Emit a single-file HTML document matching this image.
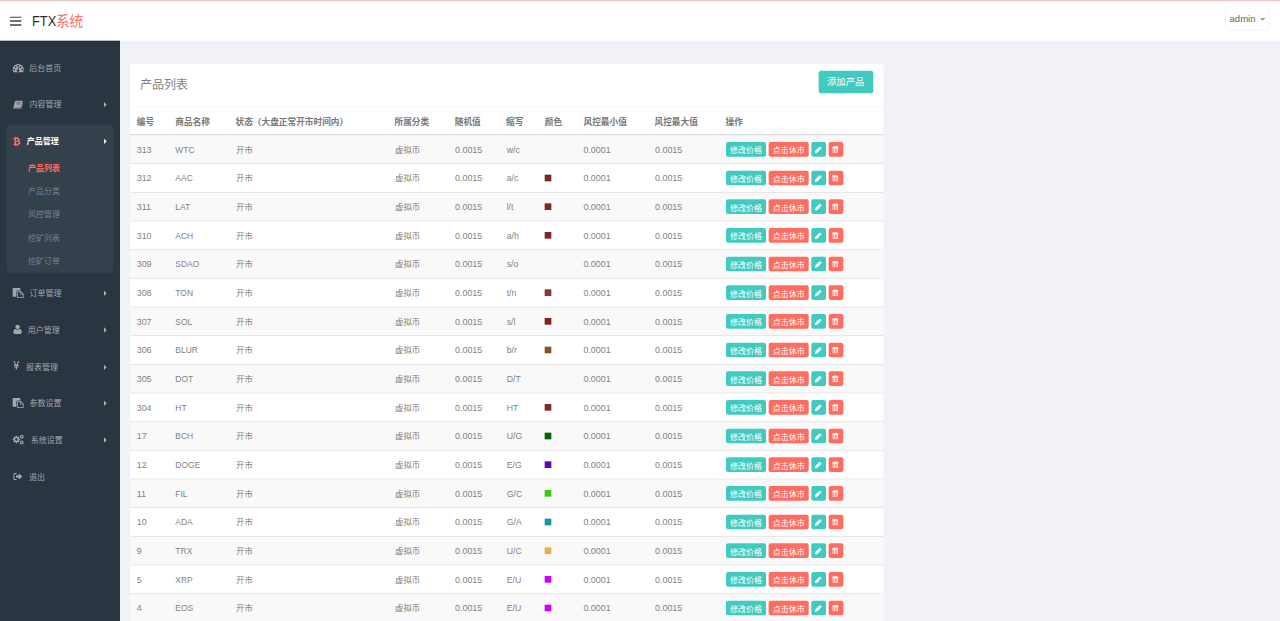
<!DOCTYPE html>
<html lang="zh-CN">
<head>
<meta charset="utf-8">
<title>FTX系统</title>
<style>
html,body{margin:0;padding:0;width:1280px;height:621px;overflow:hidden;background:#f1f2f7;}
#stage{position:absolute;left:0;top:0;width:1920px;height:932px;transform:scale(0.666667);transform-origin:0 0;font-family:"Liberation Sans","Noto Sans CJK SC",sans-serif;font-size:13px;color:#797979;background:#f1f2f7;overflow:hidden;}
#topline{position:absolute;left:0;top:0;width:1920px;height:3px;background:linear-gradient(#dbc0b6,#fff);z-index:5;}
#header{position:absolute;left:0;top:0;width:1920px;height:61px;background:#fff;}
#burger{position:absolute;left:15px;top:24.7px;width:17.3px;height:14px;}
#burger i{display:block;height:2.7px;background:#707070;margin-bottom:3px;}
#logo{position:absolute;left:47.5px;top:15.8px;font-size:21px;line-height:32px;color:#2e2e2e;white-space:nowrap;}
#logo span{color:#ff6c60;font-size:20.5px;position:relative;top:0.3px;}
#logo em{position:relative;top:0.5px;font-style:normal;font-size:21.6px;display:inline-block;transform:scaleX(0.893);transform-origin:0 50%;margin-right:-4.4px;}
#user{position:absolute;left:1837.5px;top:9.3px;width:66.5px;height:36.5px;border:1px solid #f0f0f8;border-radius:4px;box-sizing:border-box;font-size:14.4px;color:#666;line-height:36px;padding-left:5.7px;}
#user b{position:absolute;left:51.5px;top:17px;border:4px solid transparent;border-top:4px solid #999;border-bottom:0;width:0;height:0;}
#sidebar{position:absolute;left:0;top:0;width:180px;height:940px;background:#2a3542;}
#header{z-index:3;}
.ico{position:absolute;overflow:visible;}
.mt{position:absolute;font-size:12px;line-height:20px;color:#a0a5ab;white-space:nowrap;}
.mt.act{color:#fff;font-weight:bold;}
.ar{position:absolute;left:156px;width:0;height:0;border:4px solid transparent;border-left:4.5px solid #aeb2b7;border-right:0;}
#actbox{position:absolute;left:10px;top:187px;width:160px;height:222px;background:#35404d;border-radius:5px;}
.sub{position:absolute;left:42px;font-size:12px;line-height:20px;color:#77828e;white-space:nowrap;}
#card{z-index:0;position:absolute;left:195px;top:96px;width:1129.5px;height:900px;background:#fff;border-radius:4px 4px 0 0;}
#ctitle{position:absolute;left:15px;top:18.5px;font-size:18px;line-height:26px;color:#838383;}
#addbtn{position:absolute;left:1032.5px;top:10px;width:82px;height:34px;background:#41cac0;border-radius:4px;color:#fff;font-size:14px;line-height:35px;text-align:center;}
#hline{position:absolute;left:0;top:64px;width:100%;height:1px;background:#eff2f7;}
table{position:absolute;left:0;top:66.5px;width:1129.5px;border-collapse:collapse;table-layout:fixed;}
th{height:38.5px;padding:0 0 0 10px;text-align:left;font-weight:bold;color:#787878;border-bottom:2px solid #ddd;font-size:13px;white-space:nowrap;}
td{height:42px;padding:0 0 0 10px;border-top:1px solid #ddd;font-size:13px;white-space:nowrap;vertical-align:middle;}
tbody tr:first-child td{border-top:0;}
tbody td:first-child{position:relative;}
tbody tr:nth-child(odd) td:first-child::before{content:"";position:absolute;left:0;top:0;width:1129.5px;height:100%;background:#f9f9f9;z-index:-1;}
td span{position:relative;top:0.5px;font-size:13.4px;display:inline-block;transform:scaleY(1.1);transform-origin:0 79%;color:#828282;}
td span.c{top:-0.7px;font-size:12.6px;transform:none;color:#7f7f7f;}
td:nth-child(2) span{transform:scale(0.95,1.1);}
.sq{display:inline-block;width:10px;height:10px;vertical-align:middle;position:relative;top:-1px;left:-0.4px;}
.ops{font-size:0;}
.b{position:relative;top:-0.3px;display:inline-block;height:22px;line-height:18px;padding-top:4px !important;border-radius:3px;color:#fff;font-size:12px;padding:0 6px;margin-right:4px;vertical-align:middle;box-sizing:border-box;}
.bg{background:#41cac0;}
.br{background:#ff6c60;}
.ic{width:22px;padding:0;position:relative;}
.ic svg.pn{position:absolute;left:5px;top:7.2px;width:11px;height:10px;}
.ic svg.ts{position:absolute;left:5.3px;top:6.2px;width:10px;height:10.6px;}
.ic.tr{width:21.5px;}
.sub.on{color:#ff6c60;font-weight:bold;}
th span{position:relative;top:-0.6px;}
th:nth-child(1) span{left:0.1px;}
th:nth-child(2) span{left:0.5px;}
th:nth-child(3) span{left:-0.8px;}
th:nth-child(4) span{left:-0.8px;}
th:nth-child(5) span{left:-0.4px;}
th:nth-child(6) span{left:0.1px;}
th:nth-child(7) span{left:-0.4px;}
th:nth-child(8) span{left:0.7px;}
th:nth-child(9) span{left:-0.8px;}
th:nth-child(10) span{left:-0.8px;}
td:nth-child(2) span{left:0.9px;}
td:nth-child(6) span{left:0.6px;}
td:nth-child(8) span{left:0.6px;}
td:nth-child(6) span{transform:scale(0.98,1.1);}
#sbshade{position:absolute;left:0;top:61px;width:180px;height:2.5px;background:linear-gradient(#1f2934,#2a3542);}

</style>
</head>
<body>
<div id="stage">
<div id="header">
  <div id="burger"><i></i><i></i><i></i></div>
  <div id="logo"><em>FTX</em><span>系统</span></div>
  <div id="user">admin<b></b></div>
</div>
<div id="topline"></div>
<div id="sidebar">
  <div id="sbshade"></div>
  <div id="actbox"></div>
<svg class="ico" viewBox="0 0 16 12" preserveAspectRatio="none" style="left:19.2px;top:95.7px;width:16.6px;height:12.3px" fill="#a3a8af" stroke="#a3a8af" stroke-width="0"><path fill-rule="evenodd" d="M1.3 12 C0.5 10.8 0 9.4 0 8 A8 8 0 0 1 16 8 C16 9.4 15.5 10.8 14.7 12 Z M2.4 7 a1.15 1.15 0 1 0 0.01 0 Z M4.4 3.3 a1.15 1.15 0 1 0 0.01 0 Z M8 1.6 a1.15 1.15 0 1 0 0.01 0 Z M11.6 3.3 a1.15 1.15 0 1 0 0.01 0 Z M13.6 7 a1.15 1.15 0 1 0 0.01 0 Z M9.2 3.8 L7.6 7.8 A1.8 1.8 0 1 0 8.7 8.1 L10 4.1 Z"/></svg>
<div class="mt" style="left:44px;top:92px">后台首页</div>
<svg class="ico" viewBox="0 0 14 12" preserveAspectRatio="none" style="left:19.5px;top:150.5px;width:14.25px;height:12.25px" fill="#a3a8af" stroke="#a3a8af" stroke-width="0"><path fill-rule="evenodd" d="M3.6 0 H13 Q14.2 0 13.8 1.2 L11.4 9.4 Q11.1 10.4 10 10.4 H2.2 Q1.6 10.4 1.7 10.9 Q1.8 11.2 2.4 11.2 H10.6 Q11.3 11.2 11.6 10.4 L13.6 3.4 Q14.2 3.8 14 4.6 L12 11 Q11.7 12 10.6 12 H2 Q0.2 12 0 10.4 Q0 9.9 0.2 9.4 L2.6 1 Q3 0 3.6 0 Z M5 2.6 L4.8 3.4 H11 L11.2 2.6 Z M4.5 4.4 L4.3 5.2 H10.5 L10.7 4.4 Z"/></svg>
<div class="mt" style="left:44.1px;top:147px">内容管理</div>
<i class="ar" style="top:153px;border-left-color:#aeb2b7"></i>
<svg class="ico" viewBox="0 0 11 14" preserveAspectRatio="none" style="left:20.4px;top:204.75px;width:11.1px;height:14.25px" fill="#ff6c60" stroke="#ff6c60" stroke-width="0"><path fill-rule="evenodd" d="M2.6 0 H4.1 V1.7 H5.2 V0 H6.7 V1.8 Q9.6 2.1 9.8 4.2 Q9.9 5.9 8.5 6.6 Q10.8 7.2 10.6 9.4 Q10.3 11.9 6.7 12.1 V14 H5.2 V12.2 H4.1 V14 H2.6 V12.2 H0 L0.3 10.5 H1.2 Q1.7 10.5 1.7 10 V3.9 Q1.7 3.3 1 3.3 H0 V1.7 H2.6 Z M4 3.4 V6 Q7.3 6.2 7.3 4.7 Q7.3 3.2 4 3.4 Z M4 7.6 V10.5 Q8 10.7 8 9 Q8 7.4 4 7.6 Z"/></svg>
<div class="mt act" style="left:40.2px;top:202px">产品管理</div>
<i class="ar" style="top:208px;border-left-color:#fff"></i>
<svg class="ico" viewBox="0 0 16.5 15" preserveAspectRatio="none" style="left:19.4px;top:431.8px;width:16.5px;height:15px" fill="#a3a8af" stroke="#a3a8af" stroke-width="0"><path fill-rule="evenodd" d="M0.8 0 H10.8 Q11.6 0 11.6 0.8 V3.6 H7 Q5.6 3.6 5.6 5 V13 H0.8 Q0 13 0 12.2 V0.8 Q0 0 0.8 0 Z M7.4 4.5 H12.3 L16.5 8.6 V14.2 Q16.5 15 15.7 15 H7.4 Q6.6 15 6.6 14.2 V5.3 Q6.6 4.5 7.4 4.5 Z M7.8 5.7 V13.8 H15.3 V9.9 H11.9 Q10.9 9.9 10.9 8.9 V5.7 Z M12.1 6 L14.8 8.7 H12.1 Z"/></svg>
<div class="mt" style="left:44.1px;top:429.5px">订单管理</div>
<i class="ar" style="top:435.5px;border-left-color:#aeb2b7"></i>
<svg class="ico" viewBox="0 0 13 14" preserveAspectRatio="none" style="left:19.5px;top:487px;width:12.75px;height:14px" fill="#a3a8af" stroke="#a3a8af" stroke-width="0"><path d="M6.5 0 A3.4 3.4 0 1 1 6.49 0 Z M3.4 6.6 Q4.8 7.8 6.5 7.8 Q8.2 7.8 9.6 6.6 Q12.6 6.8 13 11.4 Q13 14 10.6 14 H2.4 Q0 14 0 11.4 Q0.4 6.8 3.4 6.6 Z"/></svg>
<div class="mt" style="left:41.7px;top:485px">用户管理</div>
<i class="ar" style="top:491px;border-left-color:#aeb2b7"></i>
<svg class="ico" viewBox="0 0 9 12" preserveAspectRatio="none" style="left:20px;top:542.4px;width:9.1px;height:12.3px" fill="#a3a8af" stroke="#a3a8af" stroke-width="0"><path d="M0 0 H1.9 L4.5 5 L7.1 0 H9 L6.1 5.4 H8.2 V6.7 H5.4 V7.8 H8.2 V9.1 H5.4 V12 H3.6 V9.1 H0.8 V7.8 H3.6 V6.7 H0.8 V5.4 H2.9 Z"/></svg>
<div class="mt" style="left:38.85px;top:540.5px">报表管理</div>
<i class="ar" style="top:546.5px;border-left-color:#aeb2b7"></i>
<svg class="ico" viewBox="0 0 16.5 15" preserveAspectRatio="none" style="left:19.4px;top:596.8px;width:16.5px;height:15px" fill="#a3a8af" stroke="#a3a8af" stroke-width="0"><path fill-rule="evenodd" d="M0.8 0 H10.8 Q11.6 0 11.6 0.8 V3.6 H7 Q5.6 3.6 5.6 5 V13 H0.8 Q0 13 0 12.2 V0.8 Q0 0 0.8 0 Z M7.4 4.5 H12.3 L16.5 8.6 V14.2 Q16.5 15 15.7 15 H7.4 Q6.6 15 6.6 14.2 V5.3 Q6.6 4.5 7.4 4.5 Z M7.8 5.7 V13.8 H15.3 V9.9 H11.9 Q10.9 9.9 10.9 8.9 V5.7 Z M12.1 6 L14.8 8.7 H12.1 Z"/></svg>
<div class="mt" style="left:44.1px;top:594.5px">参数设置</div>
<i class="ar" style="top:600.5px;border-left-color:#aeb2b7"></i>
<svg class="ico" viewBox="0 0 16.75 14.9" preserveAspectRatio="none" style="left:19.45px;top:651.8px;width:16.75px;height:14.9px" fill="#a3a8af" stroke="#a3a8af" stroke-width="0"><path fill-rule="evenodd" d="M11.13 6.42 L11.13 8.18 L9.67 8.34 L9.22 9.44 L10.13 10.59 L8.89 11.83 L7.74 10.92 L6.64 11.37 L6.48 12.83 L4.72 12.83 L4.56 11.37 L3.46 10.92 L2.31 11.83 L1.07 10.59 L1.98 9.44 L1.53 8.34 L0.07 8.18 L0.07 6.42 L1.53 6.26 L1.98 5.16 L1.07 4.01 L2.31 2.77 L3.46 3.68 L4.56 3.23 L4.72 1.77 L6.48 1.77 L6.64 3.23 L7.74 3.68 L8.89 2.77 L10.13 4.01 L9.22 5.16 L9.67 6.26 Z M3.60 7.30 a2.0 2.0 0 1 0 4.0 0 a2.0 2.0 0 1 0 -4.0 0 Z M16.66 3.84 L16.28 4.76 L15.43 4.51 L14.97 4.98 L15.23 5.82 L14.31 6.21 L13.89 5.43 L13.23 5.43 L12.81 6.21 L11.89 5.83 L12.14 4.98 L11.67 4.52 L10.83 4.78 L10.44 3.86 L11.22 3.44 L11.22 2.78 L10.44 2.36 L10.82 1.44 L11.67 1.69 L12.13 1.22 L11.87 0.38 L12.79 -0.01 L13.21 0.77 L13.87 0.77 L14.29 -0.01 L15.21 0.37 L14.96 1.22 L15.43 1.68 L16.27 1.42 L16.66 2.34 L15.88 2.76 L15.88 3.42 Z M12.50 3.10 a1.05 1.05 0 1 0 2.1 0 a1.05 1.05 0 1 0 -2.1 0 Z M16.66 12.54 L16.28 13.46 L15.43 13.21 L14.97 13.68 L15.23 14.52 L14.31 14.91 L13.89 14.13 L13.23 14.13 L12.81 14.91 L11.89 14.53 L12.14 13.68 L11.67 13.22 L10.83 13.48 L10.44 12.56 L11.22 12.14 L11.22 11.48 L10.44 11.06 L10.82 10.14 L11.67 10.39 L12.13 9.92 L11.87 9.08 L12.79 8.69 L13.21 9.47 L13.87 9.47 L14.29 8.69 L15.21 9.07 L14.96 9.92 L15.43 10.38 L16.27 10.12 L16.66 11.04 L15.88 11.46 L15.88 12.12 Z M12.50 11.80 a1.05 1.05 0 1 0 2.1 0 a1.05 1.05 0 1 0 -2.1 0 Z"/></svg>
<div class="mt" style="left:46px;top:650px">系统设置</div>
<i class="ar" style="top:656px;border-left-color:#aeb2b7"></i>
<svg class="ico" viewBox="0 0 14 12" preserveAspectRatio="none" style="left:20px;top:708.5px;width:13.5px;height:11.5px" fill="#a3a8af" stroke="#a3a8af" stroke-width="0"><path d="M5 0.4 V1.9 H2.8 Q1.6 1.9 1.6 3.1 V8.9 Q1.6 10.1 2.8 10.1 H5 V11.6 H2.6 Q0 11.6 0 9 V3 Q0 0.4 2.6 0.4 Z M8.6 1 L14 6 L8.6 11 V8.1 H4.2 V3.9 H8.6 Z"/></svg>
<div class="mt" style="left:43.5px;top:706.4px">退出</div>
<div class="sub on" style="top:241.9px">产品列表</div>
<div class="sub" style="top:277.4px">产品分类</div>
<div class="sub" style="top:311.9px">风控管理</div>
<div class="sub" style="top:346.9px">挖矿列表</div>
<div class="sub" style="top:382.4px">挖矿订单</div>
</div>
<div id="card">
  <div id="ctitle">产品列表</div>
  <div id="addbtn">添加产品</div>
  <div id="hline"></div>
  <table>
    <colgroup><col style="width:57.5px"><col style="width:91.5px"><col style="width:238.5px"><col style="width:90px"><col style="width:76.5px"><col style="width:58.5px"><col style="width:57px"><col style="width:108px"><col style="width:106.5px"><col></colgroup>
    <thead><tr><th><span>编号</span></th><th><span>商品名称</span></th><th><span>状态（大盘正常开市时间内）</span></th><th><span>所属分类</span></th><th><span>随机值</span></th><th><span>缩写</span></th><th><span>颜色</span></th><th><span>风控最小值</span></th><th><span>风控最大值</span></th><th><span>操作</span></th></tr></thead>
    <tbody>
<tr><td><span>313</span></td><td><span>WTC</span></td><td><span class="c">开市</span></td><td><span class="c">虚拟币</span></td><td><span>0.0015</span></td><td><span>w/c</span></td><td></td><td><span>0.0001</span></td><td><span>0.0015</span></td><td class="ops"><a class="b bg">修改价格</a><a class="b br">点击休市</a><a class="b bg ic"><svg class="pn" viewBox="0 0 11 10"><path d="M0 10 L0.92 6.12 L6.72 0.32 Q7.7 -0.5 8.7 0.3 L10.2 1.8 Q10.9 2.6 9.68 3.28 L3.88 9.08 Z" fill="#fff"/></svg></a><a class="b br ic tr"><svg class="ts" viewBox="0 0 10 10.6"><path d="M3.3 0 H6.7 L7.4 1.2 H10 V2.4 H0 V1.2 H2.6 Z M4 0.8 L3.8 1.2 H6.2 L6 0.8 Z M1 2.4 H9 V9.6 Q9 10.6 8 10.6 H2 Q1 10.6 1 9.6 Z M2.1 3.5 V9.5 H7.9 V3.5 Z M3.3 3.5 H4.4 V9.5 H3.3 Z M5.6 3.5 H6.7 V9.5 H5.6 Z" fill="#fff" fill-rule="evenodd"/></svg></a></td></tr>
<tr><td><span>312</span></td><td><span>AAC</span></td><td><span class="c">开市</span></td><td><span class="c">虚拟币</span></td><td><span>0.0015</span></td><td><span>a/c</span></td><td><i class="sq" style="background:#80261a"></i></td><td><span>0.0001</span></td><td><span>0.0015</span></td><td class="ops"><a class="b bg">修改价格</a><a class="b br">点击休市</a><a class="b bg ic"><svg class="pn" viewBox="0 0 11 10"><path d="M0 10 L0.92 6.12 L6.72 0.32 Q7.7 -0.5 8.7 0.3 L10.2 1.8 Q10.9 2.6 9.68 3.28 L3.88 9.08 Z" fill="#fff"/></svg></a><a class="b br ic tr"><svg class="ts" viewBox="0 0 10 10.6"><path d="M3.3 0 H6.7 L7.4 1.2 H10 V2.4 H0 V1.2 H2.6 Z M4 0.8 L3.8 1.2 H6.2 L6 0.8 Z M1 2.4 H9 V9.6 Q9 10.6 8 10.6 H2 Q1 10.6 1 9.6 Z M2.1 3.5 V9.5 H7.9 V3.5 Z M3.3 3.5 H4.4 V9.5 H3.3 Z M5.6 3.5 H6.7 V9.5 H5.6 Z" fill="#fff" fill-rule="evenodd"/></svg></a></td></tr>
<tr><td><span>311</span></td><td><span>LAT</span></td><td><span class="c">开市</span></td><td><span class="c">虚拟币</span></td><td><span>0.0015</span></td><td><span>l/t</span></td><td><i class="sq" style="background:#80261a"></i></td><td><span>0.0001</span></td><td><span>0.0015</span></td><td class="ops"><a class="b bg">修改价格</a><a class="b br">点击休市</a><a class="b bg ic"><svg class="pn" viewBox="0 0 11 10"><path d="M0 10 L0.92 6.12 L6.72 0.32 Q7.7 -0.5 8.7 0.3 L10.2 1.8 Q10.9 2.6 9.68 3.28 L3.88 9.08 Z" fill="#fff"/></svg></a><a class="b br ic tr"><svg class="ts" viewBox="0 0 10 10.6"><path d="M3.3 0 H6.7 L7.4 1.2 H10 V2.4 H0 V1.2 H2.6 Z M4 0.8 L3.8 1.2 H6.2 L6 0.8 Z M1 2.4 H9 V9.6 Q9 10.6 8 10.6 H2 Q1 10.6 1 9.6 Z M2.1 3.5 V9.5 H7.9 V3.5 Z M3.3 3.5 H4.4 V9.5 H3.3 Z M5.6 3.5 H6.7 V9.5 H5.6 Z" fill="#fff" fill-rule="evenodd"/></svg></a></td></tr>
<tr><td><span>310</span></td><td><span>ACH</span></td><td><span class="c">开市</span></td><td><span class="c">虚拟币</span></td><td><span>0.0015</span></td><td><span>a/h</span></td><td><i class="sq" style="background:#80262a"></i></td><td><span>0.0001</span></td><td><span>0.0015</span></td><td class="ops"><a class="b bg">修改价格</a><a class="b br">点击休市</a><a class="b bg ic"><svg class="pn" viewBox="0 0 11 10"><path d="M0 10 L0.92 6.12 L6.72 0.32 Q7.7 -0.5 8.7 0.3 L10.2 1.8 Q10.9 2.6 9.68 3.28 L3.88 9.08 Z" fill="#fff"/></svg></a><a class="b br ic tr"><svg class="ts" viewBox="0 0 10 10.6"><path d="M3.3 0 H6.7 L7.4 1.2 H10 V2.4 H0 V1.2 H2.6 Z M4 0.8 L3.8 1.2 H6.2 L6 0.8 Z M1 2.4 H9 V9.6 Q9 10.6 8 10.6 H2 Q1 10.6 1 9.6 Z M2.1 3.5 V9.5 H7.9 V3.5 Z M3.3 3.5 H4.4 V9.5 H3.3 Z M5.6 3.5 H6.7 V9.5 H5.6 Z" fill="#fff" fill-rule="evenodd"/></svg></a></td></tr>
<tr><td><span>309</span></td><td><span>SDAO</span></td><td><span class="c">开市</span></td><td><span class="c">虚拟币</span></td><td><span>0.0015</span></td><td><span>s/o</span></td><td></td><td><span>0.0001</span></td><td><span>0.0015</span></td><td class="ops"><a class="b bg">修改价格</a><a class="b br">点击休市</a><a class="b bg ic"><svg class="pn" viewBox="0 0 11 10"><path d="M0 10 L0.92 6.12 L6.72 0.32 Q7.7 -0.5 8.7 0.3 L10.2 1.8 Q10.9 2.6 9.68 3.28 L3.88 9.08 Z" fill="#fff"/></svg></a><a class="b br ic tr"><svg class="ts" viewBox="0 0 10 10.6"><path d="M3.3 0 H6.7 L7.4 1.2 H10 V2.4 H0 V1.2 H2.6 Z M4 0.8 L3.8 1.2 H6.2 L6 0.8 Z M1 2.4 H9 V9.6 Q9 10.6 8 10.6 H2 Q1 10.6 1 9.6 Z M2.1 3.5 V9.5 H7.9 V3.5 Z M3.3 3.5 H4.4 V9.5 H3.3 Z M5.6 3.5 H6.7 V9.5 H5.6 Z" fill="#fff" fill-rule="evenodd"/></svg></a></td></tr>
<tr><td><span>308</span></td><td><span>TON</span></td><td><span class="c">开市</span></td><td><span class="c">虚拟币</span></td><td><span>0.0015</span></td><td><span>t/n</span></td><td><i class="sq" style="background:#85382c"></i></td><td><span>0.0001</span></td><td><span>0.0015</span></td><td class="ops"><a class="b bg">修改价格</a><a class="b br">点击休市</a><a class="b bg ic"><svg class="pn" viewBox="0 0 11 10"><path d="M0 10 L0.92 6.12 L6.72 0.32 Q7.7 -0.5 8.7 0.3 L10.2 1.8 Q10.9 2.6 9.68 3.28 L3.88 9.08 Z" fill="#fff"/></svg></a><a class="b br ic tr"><svg class="ts" viewBox="0 0 10 10.6"><path d="M3.3 0 H6.7 L7.4 1.2 H10 V2.4 H0 V1.2 H2.6 Z M4 0.8 L3.8 1.2 H6.2 L6 0.8 Z M1 2.4 H9 V9.6 Q9 10.6 8 10.6 H2 Q1 10.6 1 9.6 Z M2.1 3.5 V9.5 H7.9 V3.5 Z M3.3 3.5 H4.4 V9.5 H3.3 Z M5.6 3.5 H6.7 V9.5 H5.6 Z" fill="#fff" fill-rule="evenodd"/></svg></a></td></tr>
<tr><td><span>307</span></td><td><span>SOL</span></td><td><span class="c">开市</span></td><td><span class="c">虚拟币</span></td><td><span>0.0015</span></td><td><span>s/l</span></td><td><i class="sq" style="background:#851f14"></i></td><td><span>0.0001</span></td><td><span>0.0015</span></td><td class="ops"><a class="b bg">修改价格</a><a class="b br">点击休市</a><a class="b bg ic"><svg class="pn" viewBox="0 0 11 10"><path d="M0 10 L0.92 6.12 L6.72 0.32 Q7.7 -0.5 8.7 0.3 L10.2 1.8 Q10.9 2.6 9.68 3.28 L3.88 9.08 Z" fill="#fff"/></svg></a><a class="b br ic tr"><svg class="ts" viewBox="0 0 10 10.6"><path d="M3.3 0 H6.7 L7.4 1.2 H10 V2.4 H0 V1.2 H2.6 Z M4 0.8 L3.8 1.2 H6.2 L6 0.8 Z M1 2.4 H9 V9.6 Q9 10.6 8 10.6 H2 Q1 10.6 1 9.6 Z M2.1 3.5 V9.5 H7.9 V3.5 Z M3.3 3.5 H4.4 V9.5 H3.3 Z M5.6 3.5 H6.7 V9.5 H5.6 Z" fill="#fff" fill-rule="evenodd"/></svg></a></td></tr>
<tr><td><span>306</span></td><td><span>BLUR</span></td><td><span class="c">开市</span></td><td><span class="c">虚拟币</span></td><td><span>0.0015</span></td><td><span>b/r</span></td><td><i class="sq" style="background:#80562a"></i></td><td><span>0.0001</span></td><td><span>0.0015</span></td><td class="ops"><a class="b bg">修改价格</a><a class="b br">点击休市</a><a class="b bg ic"><svg class="pn" viewBox="0 0 11 10"><path d="M0 10 L0.92 6.12 L6.72 0.32 Q7.7 -0.5 8.7 0.3 L10.2 1.8 Q10.9 2.6 9.68 3.28 L3.88 9.08 Z" fill="#fff"/></svg></a><a class="b br ic tr"><svg class="ts" viewBox="0 0 10 10.6"><path d="M3.3 0 H6.7 L7.4 1.2 H10 V2.4 H0 V1.2 H2.6 Z M4 0.8 L3.8 1.2 H6.2 L6 0.8 Z M1 2.4 H9 V9.6 Q9 10.6 8 10.6 H2 Q1 10.6 1 9.6 Z M2.1 3.5 V9.5 H7.9 V3.5 Z M3.3 3.5 H4.4 V9.5 H3.3 Z M5.6 3.5 H6.7 V9.5 H5.6 Z" fill="#fff" fill-rule="evenodd"/></svg></a></td></tr>
<tr><td><span>305</span></td><td><span>DOT</span></td><td><span class="c">开市</span></td><td><span class="c">虚拟币</span></td><td><span>0.0015</span></td><td><span>D/T</span></td><td></td><td><span>0.0001</span></td><td><span>0.0015</span></td><td class="ops"><a class="b bg">修改价格</a><a class="b br">点击休市</a><a class="b bg ic"><svg class="pn" viewBox="0 0 11 10"><path d="M0 10 L0.92 6.12 L6.72 0.32 Q7.7 -0.5 8.7 0.3 L10.2 1.8 Q10.9 2.6 9.68 3.28 L3.88 9.08 Z" fill="#fff"/></svg></a><a class="b br ic tr"><svg class="ts" viewBox="0 0 10 10.6"><path d="M3.3 0 H6.7 L7.4 1.2 H10 V2.4 H0 V1.2 H2.6 Z M4 0.8 L3.8 1.2 H6.2 L6 0.8 Z M1 2.4 H9 V9.6 Q9 10.6 8 10.6 H2 Q1 10.6 1 9.6 Z M2.1 3.5 V9.5 H7.9 V3.5 Z M3.3 3.5 H4.4 V9.5 H3.3 Z M5.6 3.5 H6.7 V9.5 H5.6 Z" fill="#fff" fill-rule="evenodd"/></svg></a></td></tr>
<tr><td><span>304</span></td><td><span>HT</span></td><td><span class="c">开市</span></td><td><span class="c">虚拟币</span></td><td><span>0.0015</span></td><td><span>HT</span></td><td><i class="sq" style="background:#802a2a"></i></td><td><span>0.0001</span></td><td><span>0.0015</span></td><td class="ops"><a class="b bg">修改价格</a><a class="b br">点击休市</a><a class="b bg ic"><svg class="pn" viewBox="0 0 11 10"><path d="M0 10 L0.92 6.12 L6.72 0.32 Q7.7 -0.5 8.7 0.3 L10.2 1.8 Q10.9 2.6 9.68 3.28 L3.88 9.08 Z" fill="#fff"/></svg></a><a class="b br ic tr"><svg class="ts" viewBox="0 0 10 10.6"><path d="M3.3 0 H6.7 L7.4 1.2 H10 V2.4 H0 V1.2 H2.6 Z M4 0.8 L3.8 1.2 H6.2 L6 0.8 Z M1 2.4 H9 V9.6 Q9 10.6 8 10.6 H2 Q1 10.6 1 9.6 Z M2.1 3.5 V9.5 H7.9 V3.5 Z M3.3 3.5 H4.4 V9.5 H3.3 Z M5.6 3.5 H6.7 V9.5 H5.6 Z" fill="#fff" fill-rule="evenodd"/></svg></a></td></tr>
<tr><td><span>17</span></td><td><span>BCH</span></td><td><span class="c">开市</span></td><td><span class="c">虚拟币</span></td><td><span>0.0015</span></td><td><span>U/G</span></td><td><i class="sq" style="background:#066006"></i></td><td><span>0.0001</span></td><td><span>0.0015</span></td><td class="ops"><a class="b bg">修改价格</a><a class="b br">点击休市</a><a class="b bg ic"><svg class="pn" viewBox="0 0 11 10"><path d="M0 10 L0.92 6.12 L6.72 0.32 Q7.7 -0.5 8.7 0.3 L10.2 1.8 Q10.9 2.6 9.68 3.28 L3.88 9.08 Z" fill="#fff"/></svg></a><a class="b br ic tr"><svg class="ts" viewBox="0 0 10 10.6"><path d="M3.3 0 H6.7 L7.4 1.2 H10 V2.4 H0 V1.2 H2.6 Z M4 0.8 L3.8 1.2 H6.2 L6 0.8 Z M1 2.4 H9 V9.6 Q9 10.6 8 10.6 H2 Q1 10.6 1 9.6 Z M2.1 3.5 V9.5 H7.9 V3.5 Z M3.3 3.5 H4.4 V9.5 H3.3 Z M5.6 3.5 H6.7 V9.5 H5.6 Z" fill="#fff" fill-rule="evenodd"/></svg></a></td></tr>
<tr><td><span>12</span></td><td><span>DOGE</span></td><td><span class="c">开市</span></td><td><span class="c">虚拟币</span></td><td><span>0.0015</span></td><td><span>E/G</span></td><td><i class="sq" style="background:#5a08b8"></i></td><td><span>0.0001</span></td><td><span>0.0015</span></td><td class="ops"><a class="b bg">修改价格</a><a class="b br">点击休市</a><a class="b bg ic"><svg class="pn" viewBox="0 0 11 10"><path d="M0 10 L0.92 6.12 L6.72 0.32 Q7.7 -0.5 8.7 0.3 L10.2 1.8 Q10.9 2.6 9.68 3.28 L3.88 9.08 Z" fill="#fff"/></svg></a><a class="b br ic tr"><svg class="ts" viewBox="0 0 10 10.6"><path d="M3.3 0 H6.7 L7.4 1.2 H10 V2.4 H0 V1.2 H2.6 Z M4 0.8 L3.8 1.2 H6.2 L6 0.8 Z M1 2.4 H9 V9.6 Q9 10.6 8 10.6 H2 Q1 10.6 1 9.6 Z M2.1 3.5 V9.5 H7.9 V3.5 Z M3.3 3.5 H4.4 V9.5 H3.3 Z M5.6 3.5 H6.7 V9.5 H5.6 Z" fill="#fff" fill-rule="evenodd"/></svg></a></td></tr>
<tr><td><span>11</span></td><td><span>FIL</span></td><td><span class="c">开市</span></td><td><span class="c">虚拟币</span></td><td><span>0.0015</span></td><td><span>G/C</span></td><td><i class="sq" style="background:#3cc814"></i></td><td><span>0.0001</span></td><td><span>0.0015</span></td><td class="ops"><a class="b bg">修改价格</a><a class="b br">点击休市</a><a class="b bg ic"><svg class="pn" viewBox="0 0 11 10"><path d="M0 10 L0.92 6.12 L6.72 0.32 Q7.7 -0.5 8.7 0.3 L10.2 1.8 Q10.9 2.6 9.68 3.28 L3.88 9.08 Z" fill="#fff"/></svg></a><a class="b br ic tr"><svg class="ts" viewBox="0 0 10 10.6"><path d="M3.3 0 H6.7 L7.4 1.2 H10 V2.4 H0 V1.2 H2.6 Z M4 0.8 L3.8 1.2 H6.2 L6 0.8 Z M1 2.4 H9 V9.6 Q9 10.6 8 10.6 H2 Q1 10.6 1 9.6 Z M2.1 3.5 V9.5 H7.9 V3.5 Z M3.3 3.5 H4.4 V9.5 H3.3 Z M5.6 3.5 H6.7 V9.5 H5.6 Z" fill="#fff" fill-rule="evenodd"/></svg></a></td></tr>
<tr><td><span>10</span></td><td><span>ADA</span></td><td><span class="c">开市</span></td><td><span class="c">虚拟币</span></td><td><span>0.0015</span></td><td><span>G/A</span></td><td><i class="sq" style="background:#109aa0"></i></td><td><span>0.0001</span></td><td><span>0.0015</span></td><td class="ops"><a class="b bg">修改价格</a><a class="b br">点击休市</a><a class="b bg ic"><svg class="pn" viewBox="0 0 11 10"><path d="M0 10 L0.92 6.12 L6.72 0.32 Q7.7 -0.5 8.7 0.3 L10.2 1.8 Q10.9 2.6 9.68 3.28 L3.88 9.08 Z" fill="#fff"/></svg></a><a class="b br ic tr"><svg class="ts" viewBox="0 0 10 10.6"><path d="M3.3 0 H6.7 L7.4 1.2 H10 V2.4 H0 V1.2 H2.6 Z M4 0.8 L3.8 1.2 H6.2 L6 0.8 Z M1 2.4 H9 V9.6 Q9 10.6 8 10.6 H2 Q1 10.6 1 9.6 Z M2.1 3.5 V9.5 H7.9 V3.5 Z M3.3 3.5 H4.4 V9.5 H3.3 Z M5.6 3.5 H6.7 V9.5 H5.6 Z" fill="#fff" fill-rule="evenodd"/></svg></a></td></tr>
<tr><td><span>9</span></td><td><span>TRX</span></td><td><span class="c">开市</span></td><td><span class="c">虚拟币</span></td><td><span>0.0015</span></td><td><span>U/C</span></td><td><i class="sq" style="background:#e8b040"></i></td><td><span>0.0001</span></td><td><span>0.0015</span></td><td class="ops"><a class="b bg">修改价格</a><a class="b br">点击休市</a><a class="b bg ic"><svg class="pn" viewBox="0 0 11 10"><path d="M0 10 L0.92 6.12 L6.72 0.32 Q7.7 -0.5 8.7 0.3 L10.2 1.8 Q10.9 2.6 9.68 3.28 L3.88 9.08 Z" fill="#fff"/></svg></a><a class="b br ic tr"><svg class="ts" viewBox="0 0 10 10.6"><path d="M3.3 0 H6.7 L7.4 1.2 H10 V2.4 H0 V1.2 H2.6 Z M4 0.8 L3.8 1.2 H6.2 L6 0.8 Z M1 2.4 H9 V9.6 Q9 10.6 8 10.6 H2 Q1 10.6 1 9.6 Z M2.1 3.5 V9.5 H7.9 V3.5 Z M3.3 3.5 H4.4 V9.5 H3.3 Z M5.6 3.5 H6.7 V9.5 H5.6 Z" fill="#fff" fill-rule="evenodd"/></svg></a></td></tr>
<tr><td><span>5</span></td><td><span>XRP</span></td><td><span class="c">开市</span></td><td><span class="c">虚拟币</span></td><td><span>0.0015</span></td><td><span>E/U</span></td><td><i class="sq" style="background:#d000f8"></i></td><td><span>0.0001</span></td><td><span>0.0015</span></td><td class="ops"><a class="b bg">修改价格</a><a class="b br">点击休市</a><a class="b bg ic"><svg class="pn" viewBox="0 0 11 10"><path d="M0 10 L0.92 6.12 L6.72 0.32 Q7.7 -0.5 8.7 0.3 L10.2 1.8 Q10.9 2.6 9.68 3.28 L3.88 9.08 Z" fill="#fff"/></svg></a><a class="b br ic tr"><svg class="ts" viewBox="0 0 10 10.6"><path d="M3.3 0 H6.7 L7.4 1.2 H10 V2.4 H0 V1.2 H2.6 Z M4 0.8 L3.8 1.2 H6.2 L6 0.8 Z M1 2.4 H9 V9.6 Q9 10.6 8 10.6 H2 Q1 10.6 1 9.6 Z M2.1 3.5 V9.5 H7.9 V3.5 Z M3.3 3.5 H4.4 V9.5 H3.3 Z M5.6 3.5 H6.7 V9.5 H5.6 Z" fill="#fff" fill-rule="evenodd"/></svg></a></td></tr>
<tr><td><span>4</span></td><td><span>EOS</span></td><td><span class="c">开市</span></td><td><span class="c">虚拟币</span></td><td><span>0.0015</span></td><td><span>E/U</span></td><td><i class="sq" style="background:#d000f8"></i></td><td><span>0.0001</span></td><td><span>0.0015</span></td><td class="ops"><a class="b bg">修改价格</a><a class="b br">点击休市</a><a class="b bg ic"><svg class="pn" viewBox="0 0 11 10"><path d="M0 10 L0.92 6.12 L6.72 0.32 Q7.7 -0.5 8.7 0.3 L10.2 1.8 Q10.9 2.6 9.68 3.28 L3.88 9.08 Z" fill="#fff"/></svg></a><a class="b br ic tr"><svg class="ts" viewBox="0 0 10 10.6"><path d="M3.3 0 H6.7 L7.4 1.2 H10 V2.4 H0 V1.2 H2.6 Z M4 0.8 L3.8 1.2 H6.2 L6 0.8 Z M1 2.4 H9 V9.6 Q9 10.6 8 10.6 H2 Q1 10.6 1 9.6 Z M2.1 3.5 V9.5 H7.9 V3.5 Z M3.3 3.5 H4.4 V9.5 H3.3 Z M5.6 3.5 H6.7 V9.5 H5.6 Z" fill="#fff" fill-rule="evenodd"/></svg></a></td></tr>
    </tbody>
  </table>
</div>
</div>
</body>
</html>
